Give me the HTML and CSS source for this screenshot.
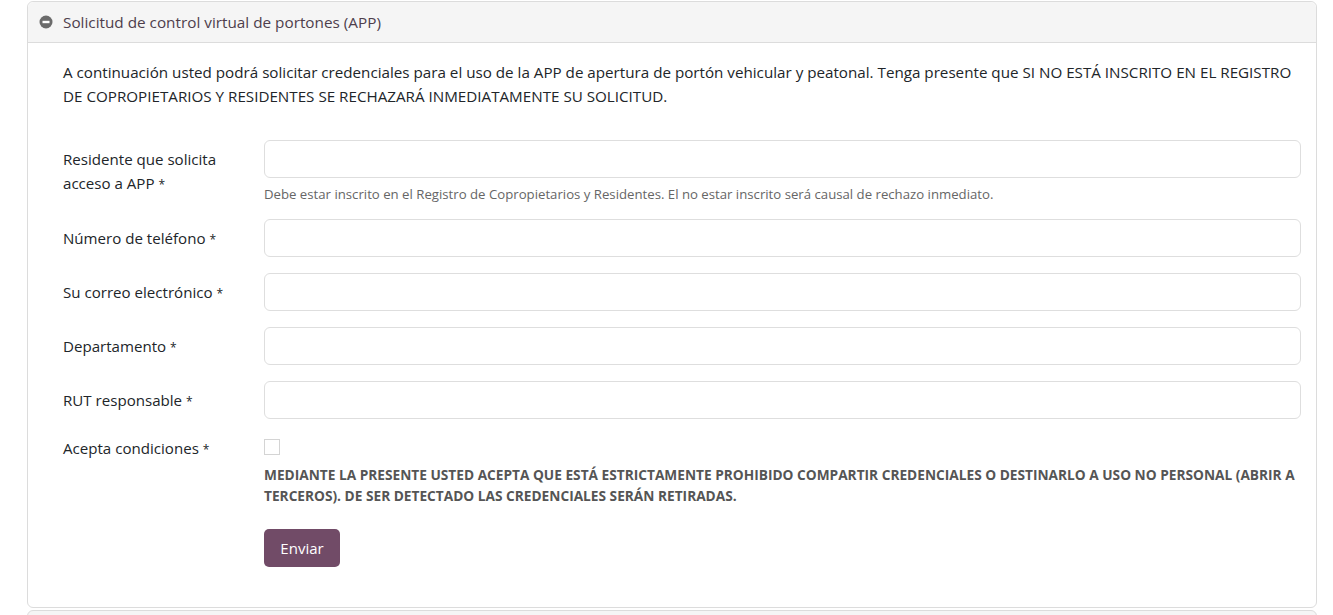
FILE: index.html
```html
<!DOCTYPE html>
<html lang="es">
<head>
<meta charset="utf-8">
<title>Solicitud</title>
<link rel="stylesheet" href="styles.css">
</head>
<body>
<div class="page">
  <section class="card">
    <header class="card-header">
      <svg class="icon" width="14" height="14" viewBox="0 0 14 14"><circle cx="7" cy="7" r="6.5" fill="#6b6b6b"/><rect x="3.5" y="5.8" width="7" height="2.4" fill="#fff"/></svg>
      <span class="card-title">Solicitud de control virtual de portones (APP)</span>
    </header>
    <div class="card-body">
      <p class="intro">A continuación usted podrá solicitar credenciales para el uso de la APP de apertura de portón vehicular y peatonal. Tenga presente que SI NO ESTÁ INSCRITO EN EL REGISTRO DE COPROPIETARIOS Y RESIDENTES SE RECHAZARÁ INMEDIATAMENTE SU SOLICITUD.</p>
      <form class="form">
        <div class="row">
          <label class="label">Residente que solicita acceso a APP <span class="req">*</span></label>
          <div class="field">
            <input class="input" type="text">
            <small class="help">Debe estar inscrito en el Registro de Copropietarios y Residentes. El no estar inscrito será causal de rechazo inmediato.</small>
          </div>
        </div>
        <div class="row">
          <label class="label">Número de teléfono <span class="req">*</span></label>
          <div class="field"><input class="input" type="text"></div>
        </div>
        <div class="row">
          <label class="label">Su correo electrónico <span class="req">*</span></label>
          <div class="field"><input class="input" type="text"></div>
        </div>
        <div class="row">
          <label class="label">Departamento <span class="req">*</span></label>
          <div class="field"><input class="input" type="text"></div>
        </div>
        <div class="row">
          <label class="label">RUT responsable <span class="req">*</span></label>
          <div class="field"><input class="input" type="text"></div>
        </div>
        <div class="row row-check">
          <label class="label">Acepta condiciones <span class="req">*</span></label>
          <div class="field">
            <span class="checkbox"></span>
            <p class="terms">MEDIANTE LA PRESENTE USTED ACEPTA QUE ESTÁ ESTRICTAMENTE PROHIBIDO COMPARTIR CREDENCIALES O DESTINARLO A USO NO PERSONAL (ABRIR A TERCEROS). DE SER DETECTADO LAS CREDENCIALES SERÁN RETIRADAS.</p>
          </div>
        </div>
        <div class="row row-submit">
          <span></span>
          <div class="field"><button class="btn" type="button">Enviar</button></div>
        </div>
      </form>
    </div>
  </section>
  <section class="card card-next"></section>
</div>
</body>
</html>
```
FILE: styles.css
```css
* { box-sizing: border-box; }
html, body { margin: 0; padding: 0; background: #fff; }
body {
  font-family: "Open Sans", "Noto Sans", sans-serif;
  font-size: 15px;
  color: #212529;
  overflow: hidden;
}
.page {
  padding: 1px 16px 0 27px;
}
.card {
  border: 1px solid #dcdcdc;
  border-radius: 6px;
  background: #fff;
  width: 1290px;
}
.card-header {
  height: 41px;
  background: #f5f5f5;
  border-bottom: 1px solid #dcdcdc;
  border-radius: 6px 6px 0 0;
  display: flex;
  align-items: center;
  padding-left: 11px;
  gap: 10px;
}
.icon { flex: none; }
.card-title {
  color: #4e3e4c;
  font-size: 15.3px;
}
.card-body {
  padding: 17px 15px 40px 35px;
}
.intro {
  margin: 0 0 32px;
  line-height: 24px;
  font-size: 15.2px;
}
.form {
  display: flex;
  flex-direction: column;
  gap: 16px;
}
.row {
  display: grid;
  grid-template-columns: 201px 1fr;
}
.label {
  font-size: 15.1px;
  line-height: 24px;
  padding-top: 7px;
  padding-right: 40px;
}
.req { font-size: 12px; }
.field {
  display: flex;
  flex-direction: column;
}
.input {
  height: 38px;
  width: 100%;
  border: 1px solid #dedede;
  border-radius: 6px;
  background: #fff;
  font: inherit;
}
.help {
  margin-top: 8px;
  font-size: 13.2px;
  color: #666;
  line-height: 17px;
}
.row-check .label { padding-top: 1px; }
.checkbox {
  width: 16px;
  height: 16px;
  border: 1px solid #d4d4d4;
  margin-top: 4px;
}
.terms {
  margin: 9px 0 0;
  font-weight: 700;
  font-size: 13.7px;
  line-height: 21px;
  color: #555;
}
.row-submit { margin-top: 7px; }
.btn {
  align-self: flex-start;
  width: 76px;
  height: 38px;
  background: #714b67;
  color: #fff;
  border: none;
  border-radius: 5px;
  font-family: inherit;
  font-size: 15px;
}
.card-next {
  margin-top: 2px;
  height: 20px;
  background: #f5f5f5;
}
```
